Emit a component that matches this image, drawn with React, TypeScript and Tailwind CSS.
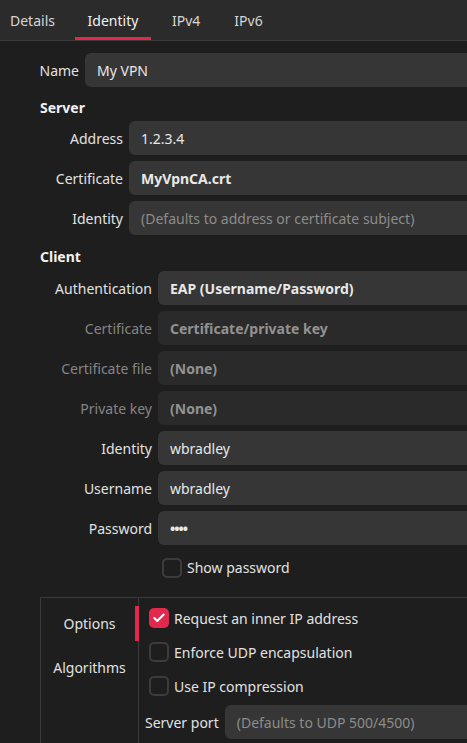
import { Check } from 'lucide-react';

const font = { fontFamily: '"Noto Sans", "Open Sans", sans-serif' };

function Field({ children, dim, bold, placeholder }: { children: React.ReactNode; dim?: boolean; bold?: boolean; placeholder?: boolean }) {
    const tone = dim ? 'bg-[#2a2a2a] text-[#929292]' : placeholder ? 'bg-[#363636] text-[#8c8c8c]' : 'bg-[#363636] text-[#e8e8e8]';
    return <div className={`flex h-[34px] flex-1 items-center rounded-l-[6px] pl-3 text-[14px] ${tone} ${bold ? 'font-bold' : ''}`}>{children}</div>;
}

function Row({ label, labelW, dim, children }: { label: string; labelW: string; dim?: boolean; children: React.ReactNode }) {
    return (
        <div className="flex items-center gap-[6px]">
            <div className={`${labelW} shrink-0 text-right text-[14px] ${dim ? 'text-[#858585]' : 'text-[#e2e2e2]'}`}>{label}</div>
            {children}
        </div>
    );
}

function Box({ checked }: { checked?: boolean }) {
    return checked ? (
        <div className="flex h-[20px] w-[20px] items-center justify-center rounded-[5px] bg-[#e0294d]">
            <Check size={14} strokeWidth={3.5} className="text-white" />
        </div>
    ) : (
        <div className="h-[20px] w-[20px] rounded-[5px] border-2 border-[#3c3c3c]" />
    );
}

export default function App() {
    return (
        <div className="h-[743px] w-[467px] overflow-hidden bg-[#1e1e1e]" style={font}>
            <div className="flex h-[41px] items-stretch border-b border-[#3a3a3a] bg-[#2b2b2b] text-[14px] text-[#d6d6d6]">
                <div className="flex items-center px-[10px]">Details</div>
                <div className="relative ml-[10px] flex w-[76px] items-center justify-center text-[#f0f0f0]">
                    Identity
                    <div className="absolute bottom-0 left-0 h-[3px] w-full bg-[#e0294d]" />
                </div>
                <div className="ml-[21px] flex items-center">IPv4</div>
                <div className="ml-[34px] flex items-center">IPv6</div>
            </div>

            <div className="w-[520px] pt-[12px]">
                <Row label="Name" labelW="w-[79px]">
                    <Field>My VPN</Field>
                </Row>

                <div className="mt-[8px] h-[26px] pl-[40px] text-[14px] font-bold leading-[26px] text-[#f0f0f0]">Server</div>
                <div className="flex flex-col gap-[6px]">
                    <Row label="Address" labelW="w-[123px]">
                        <Field>1.2.3.4</Field>
                    </Row>
                    <Row label="Certificate" labelW="w-[123px]">
                        <Field bold>MyVpnCA.crt</Field>
                    </Row>
                    <Row label="Identity" labelW="w-[123px]">
                        <Field placeholder>(Defaults to address or certificate subject)</Field>
                    </Row>
                </div>

                <div className="mt-[8px] h-[28px] pl-[40px] text-[14px] font-bold leading-[28px] text-[#f0f0f0]">Client</div>
                <div className="flex flex-col gap-[6px]">
                    <Row label="Authentication" labelW="w-[152px]">
                        <Field bold>EAP (Username/Password)</Field>
                    </Row>
                    <Row label="Certificate" labelW="w-[152px]" dim>
                        <Field dim bold>
                            Certificate/private key
                        </Field>
                    </Row>
                    <Row label="Certificate file" labelW="w-[152px]" dim>
                        <Field dim bold>
                            (None)
                        </Field>
                    </Row>
                    <Row label="Private key" labelW="w-[152px]" dim>
                        <Field dim bold>
                            (None)
                        </Field>
                    </Row>
                    <Row label="Identity" labelW="w-[152px]">
                        <Field>wbradley</Field>
                    </Row>
                    <Row label="Username" labelW="w-[152px]">
                        <Field>wbradley</Field>
                    </Row>
                    <Row label="Password" labelW="w-[152px]">
                        <Field>
                            <span className="text-[14px] font-bold tracking-[-1px]">••••</span>
                        </Field>
                    </Row>
                </div>

                <div className="mt-[12px] flex items-center gap-[5px] pl-[162px] text-[14px] text-[#e2e2e2]">
                    <Box />
                    Show password
                </div>

                <div className="ml-[40px] mt-[19px] flex h-[160px] border-l border-t border-[#3a3a3a]">
                    <div className="relative flex w-[98px] shrink-0 flex-col items-center border-r border-[#3a3a3a] pt-[8px] text-[14px] text-[#e2e2e2]">
                        <div className="absolute right-[-1px] top-[8px] h-[35px] w-[4px] bg-[#e0294d]" />
                        <div className="flex h-[35px] items-center">Options</div>
                        <div className="mt-[8px] flex h-[36px] items-center">Algorithms</div>
                    </div>
                    <div className="flex flex-1 flex-col pt-[10px] text-[14px] text-[#e2e2e2]">
                        <div className="flex h-[20px] items-center gap-[5px] pl-[10px]">
                            <Box checked />
                            Request an inner IP address
                        </div>
                        <div className="mt-[14px] flex h-[20px] items-center gap-[5px] pl-[10px]">
                            <Box />
                            Enforce UDP encapsulation
                        </div>
                        <div className="mt-[14px] flex h-[20px] items-center gap-[5px] pl-[10px]">
                            <Box />
                            Use IP compression
                        </div>
                        <div className="mt-[9px] flex items-center gap-[6px] pl-[6px]">
                            <div className="text-[14px] text-[#e2e2e2]">Server port</div>
                            <Field placeholder>(Defaults to UDP 500/4500)</Field>
                        </div>
                    </div>
                </div>
            </div>
        </div>
    );
}
